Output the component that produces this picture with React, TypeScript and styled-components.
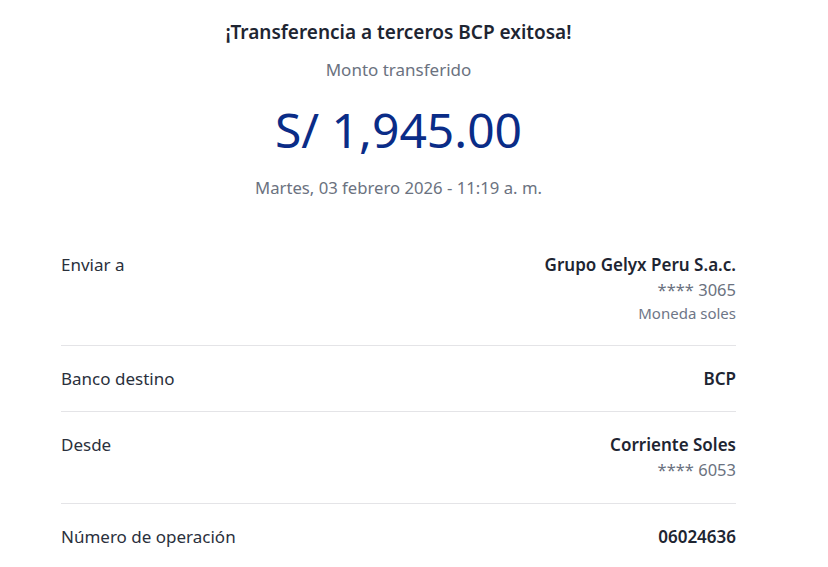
import React from "react";
import styled, { createGlobalStyle } from "styled-components";

const Global = createGlobalStyle`
  html, body { margin: 0; padding: 0; background: #ffffff; }
  body { font-family: "Noto Sans", "Open Sans", sans-serif; -webkit-font-smoothing: antialiased; }
`;

const Page = styled.main`
  width: 675px;
  padding: 20px 0 0 61px;
  display: flex;
  flex-direction: column;
`;

const Header = styled.header`
  display: flex;
  flex-direction: column;
  align-items: center;
  text-align: center;
`;

const Title = styled.h1`
  margin: 0;
  font-size: 19px;
  line-height: 24px;
  font-weight: 600;
  color: #1e2532;
`;

const Subtitle = styled.div`
  margin-top: 14px;
  font-size: 17px;
  line-height: 24px;
  color: #6b7280;
`;

const Amount = styled.div`
  margin-top: 18px;
  font-size: 48px;
  line-height: 60px;
  color: #0a2c87;
`;

const DateText = styled.div`
  margin-top: 16px;
  font-size: 16.7px;
  line-height: 24px;
  color: #6b7280;
`;

const List = styled.section`
  margin-top: 53px;
  display: flex;
  flex-direction: column;
`;

const Row = styled.div<{ $last?: boolean }>`
  display: flex;
  justify-content: space-between;
  align-items: flex-start;
  padding: 21px 0 ${(p) => (p.$last ? "0" : "20px")};
  border-bottom: ${(p) => (p.$last ? "none" : "1px solid #e4e4e7")};
  &:first-child { padding-top: 0; padding-bottom: 22px; }
`;

const Label = styled.div`
  font-size: 17px;
  line-height: 24px;
  color: #2a303c;
`;

const Values = styled.div`
  display: flex;
  flex-direction: column;
  align-items: flex-end;
  text-align: right;
`;

const Strong = styled.div`
  font-size: 17px;
  line-height: 24px;
  font-weight: 600;
  color: #1e2532;
`;

const Muted = styled.div<{ $small?: boolean }>`
  font-size: ${(p) => (p.$small ? "15px" : "16.5px")};
  line-height: ${(p) => (p.$small ? "20px" : "26px")};
  color: ${(p) => (p.$small ? "#6e7687" : "#6b7280")};
`;

export default function App() {
  return (
    <>
      <Global />
      <Page>
        <Header>
          <Title>¡Transferencia a terceros BCP exitosa!</Title>
          <Subtitle>Monto transferido</Subtitle>
          <Amount>S/ 1,945.00</Amount>
          <DateText>Martes, 03 febrero 2026 - 11:19 a. m.</DateText>
        </Header>
        <List>
          <Row>
            <Label>Enviar a</Label>
            <Values>
              <Strong>Grupo Gelyx Peru S.a.c.</Strong>
              <Muted>**** 3065</Muted>
              <Muted $small>Moneda soles</Muted>
            </Values>
          </Row>
          <Row>
            <Label>Banco destino</Label>
            <Values>
              <Strong>BCP</Strong>
            </Values>
          </Row>
          <Row>
            <Label>Desde</Label>
            <Values>
              <Strong>Corriente Soles</Strong>
              <Muted>**** 6053</Muted>
            </Values>
          </Row>
          <Row $last>
            <Label>Número de operación</Label>
            <Values>
              <Strong>06024636</Strong>
            </Values>
          </Row>
        </List>
      </Page>
    </>
  );
}
